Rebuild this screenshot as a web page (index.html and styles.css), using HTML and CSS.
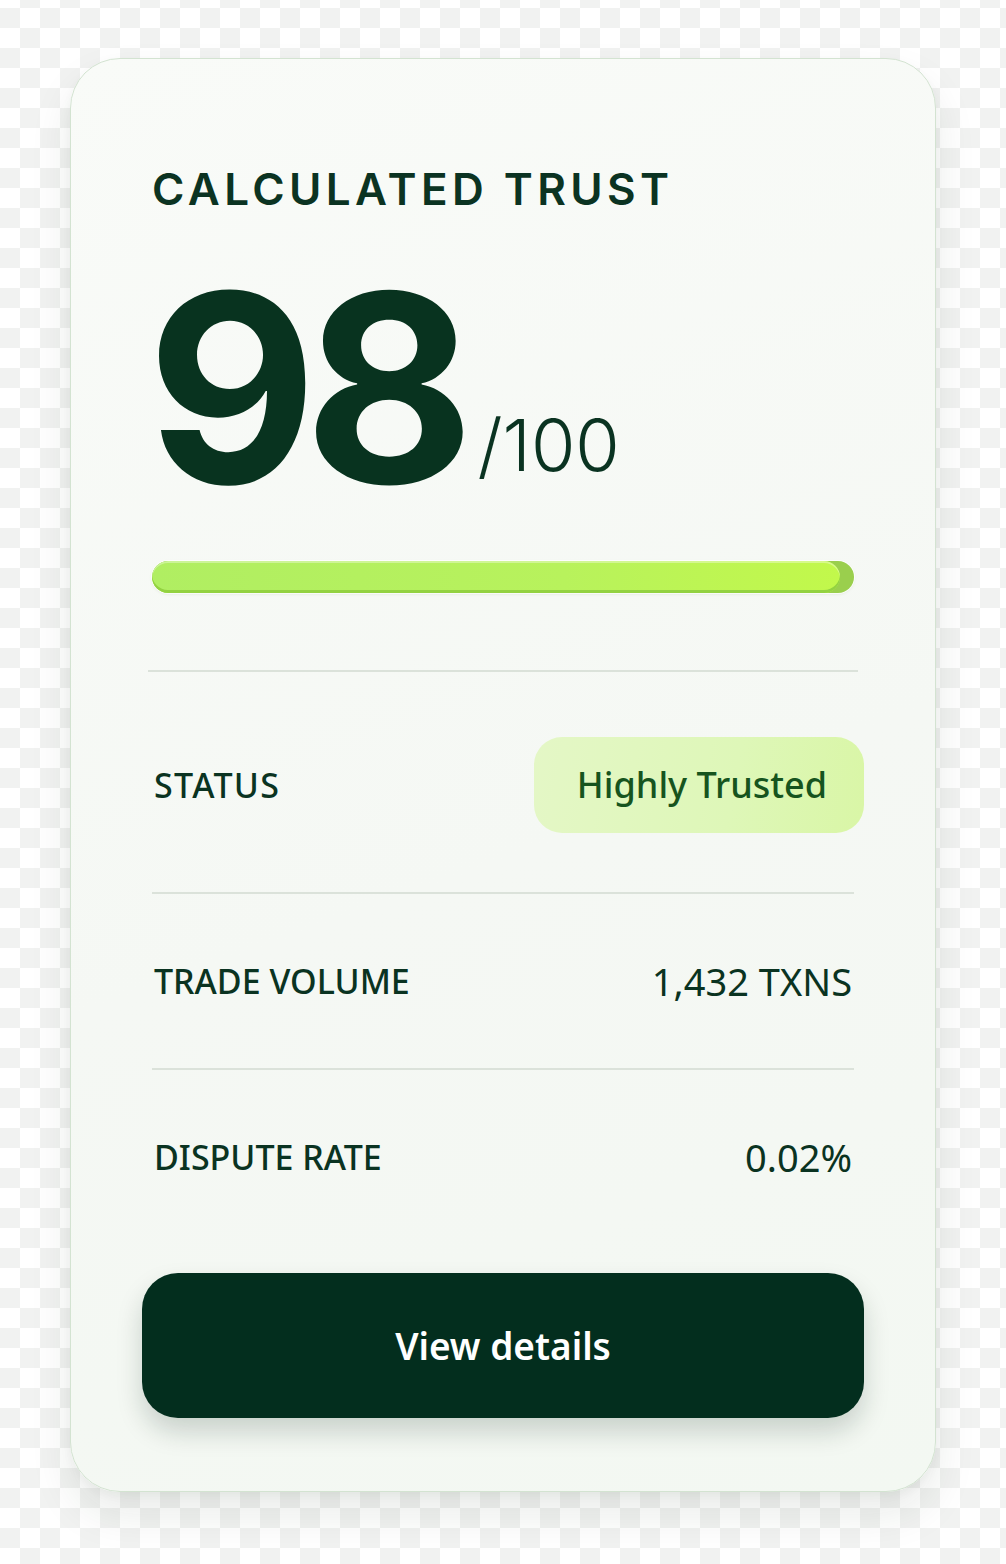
FILE: index.html
```html
<!DOCTYPE html>
<html lang="en">
<head>
<meta charset="utf-8">
<title>Calculated Trust</title>
<link rel="stylesheet" href="styles.css">
</head>
<body>
  <main class="card">
    <h1 class="eyebrow">CALCULATED TRUST</h1>
    <div class="score">
      <span class="score-value">98</span>
      <span class="score-max">/100</span>
    </div>
    <div class="bar">
      <div class="bar-fill" style="width: 98%"></div>
    </div>
    <hr class="divider divider-wide">
    <div class="row row-status">
      <span class="label label-status">STATUS</span>
      <span class="chip">Highly Trusted</span>
    </div>
    <hr class="divider">
    <div class="row">
      <span class="label">TRADE VOLUME</span>
      <span class="value">1,432 TXNS</span>
    </div>
    <hr class="divider">
    <div class="row">
      <span class="label">DISPUTE RATE</span>
      <span class="value">0.02%</span>
    </div>
    <button class="btn" type="button">View details</button>
  </main>
</body>
</html>
```

FILE: styles.css
```css
* { box-sizing: border-box; }

html, body { margin: 0; padding: 0; }

body {
  width: 1006px;
  min-height: 1564px;
  background-color: #ffffff;
  background-image: repeating-conic-gradient(#f1f2f1 0 25%, #ffffff 0 50%);
  background-size: 40px 40px;
  background-position: 0 -12px;
  font-family: "Noto Sans", "Liberation Sans", sans-serif;
  color: #0a3321;
  padding-top: 58px;
}

.card {
  width: 866px;
  height: 1434px;
  margin: 0 auto;
  padding: 108px 81px 0;
  border-radius: 50px;
  background: linear-gradient(160deg, #f9fbf8 0%, #f5f8f4 55%, #f3f8f2 100%);
  border: 1.5px solid #d3e3d1;
  box-shadow: 0 22px 44px rgba(20, 40, 25, 0.09), 0 4px 10px rgba(20, 40, 25, 0.04);
  display: flex;
  flex-direction: column;
}

.eyebrow {
  margin: 0;
  font-family: "Inter", "Liberation Sans", sans-serif;
  font-size: 44px;
  line-height: 1;
  font-weight: 600;
  letter-spacing: 0.1em;
  color: #0b3322;
}

.score {
  display: flex;
  align-items: flex-end;
  margin-top: 46px;
  color: #08331f;
}

.score-value {
  font-family: "Inter", "Liberation Sans", sans-serif;
  font-weight: 700;
  font-size: 262px;
  line-height: 1;
  letter-spacing: -0.05em;
  margin-left: -5px;
}

.score-max {
  font-family: "Inter", "Liberation Sans", sans-serif;
  font-weight: 300;
  font-size: 72px;
  line-height: 1;
  margin-left: 16px;
  margin-bottom: 38px;
  color: #0a3321;
}

.bar {
  margin-top: 42px;
  height: 32px;
  border-radius: 16px;
  background: #9acf4d;
  box-shadow: 0 0 0 1px rgba(255, 255, 255, 0.8), 0 1px 3px rgba(80, 120, 40, 0.15);
  overflow: hidden;
}

.bar-fill {
  height: 100%;
  border-radius: 16px;
  background: linear-gradient(90deg, #b0ee62 0%, #b8f25c 60%, #c2f84b 100%);
  box-shadow: inset 0 -3px 0 #93d241, inset 0 2px 0 rgba(255, 255, 255, 0.35);
}

.divider {
  margin: 0;
  border: 0;
  height: 2px;
  background: #dbe2da;
}

.divider-wide {
  margin: 77px -4px 0;
}

.row {
  display: flex;
  align-items: center;
  justify-content: space-between;
  height: 174px;
  padding: 0 2px;
}

.row-status {
  height: 220px;
  margin-right: -10px;
  padding: 5px 0 0 2px;
}

.label {
  font-size: 34px;
  font-weight: 500;
  color: #0a3321;
}

.label-status {
  letter-spacing: 0.04em;
}

.value {
  font-size: 38px;
  font-weight: 400;
  color: #0a3321;
}

.chip {
  display: flex;
  align-items: center;
  height: 96px;
  padding: 0 37px 0 43px;
  border-radius: 28px;
  background: linear-gradient(100deg, #e4f7c6 0%, #def7b8 60%, #d9f6a6 100%);
  font-size: 36px;
  font-weight: 500;
  color: #16541e;
}

.btn {
  margin: 29px -10px 0;
  height: 145px;
  border: 0;
  border-radius: 36px;
  background: #032e1e;
  color: #ffffff;
  font-family: "Noto Sans", "Liberation Sans", sans-serif;
  font-size: 37px;
  font-weight: 600;
  box-shadow: 0 14px 26px rgba(10, 40, 25, 0.18);
  cursor: pointer;
}
```
